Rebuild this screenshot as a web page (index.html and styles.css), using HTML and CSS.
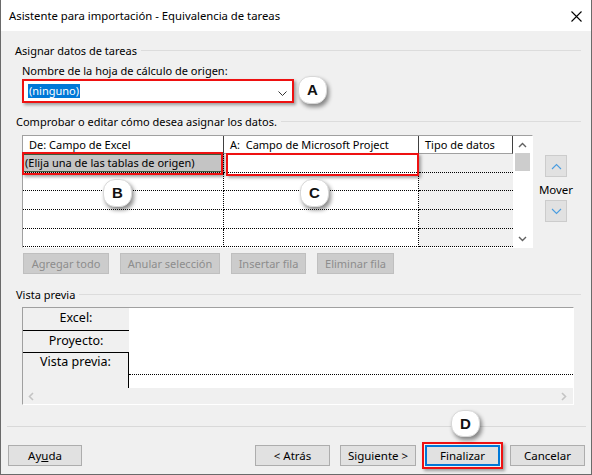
FILE: index.html
```html
<!DOCTYPE html>
<html>
<head>
<meta charset="utf-8">
<link rel="stylesheet" href="styles.css">
</head>
<body>
<div class="window">
  <div class="titlebar">
    <span class="title">Asistente para importación - Equivalencia de tareas</span>
    <svg class="close" width="11" height="11" viewBox="0 0 11 11"><path d="M0.5 0.5 L10.5 10.5 M10.5 0.5 L0.5 10.5" stroke="#000" stroke-width="1.1" fill="none"/></svg>
  </div>
  <div class="content">
    <div class="group-title s1"><span>Asignar datos de tareas</span><i></i></div>
    <div class="label">Nombre de la hoja de cálculo de origen:</div>
    <div class="combo-row">
      <div class="combo">
        <span class="sel">(ninguno)</span>
        <svg class="chev" width="9" height="5" viewBox="0 0 9 5"><path d="M0.5 0.5 L4.5 4.5 L8.5 0.5" stroke="#333" stroke-width="1" fill="none"/></svg>
      </div>
      <div class="badge">A</div>
    </div>

    <div class="group-title s2"><span>Comprobar o editar cómo desea asignar los datos.</span><i></i></div>
    <div class="table-row">
      <div class="table">
        <div class="grid">
          <div class="hcell">De: Campo de Excel</div>
          <div class="hcell">A:&nbsp; Campo de Microsoft Project</div>
          <div class="hcell">Tipo de datos</div>

          <div class="cell c1 r1 current">(Elija una de las tablas de origen)</div>
          <div class="cell c2 r1"></div>
          <div class="cell c3 r1"></div>

          <div class="cell c1"></div><div class="cell c2"></div><div class="cell c3"></div>
          <div class="cell c1"></div><div class="cell c2"></div><div class="cell c3"></div>
          <div class="cell c1 tall"></div><div class="cell c2 tall"></div><div class="cell c3 tall"></div>
          <div class="cell c1"></div><div class="cell c2"></div><div class="cell c3"></div>
          <div class="cell c1"></div><div class="cell c2"></div><div class="cell c3"></div>
        </div>
        <div class="vscroll">
          <svg class="arr-up" width="9" height="6" viewBox="0 0 9 6"><path d="M1 5 L4.5 1.5 L8 5" stroke="#606060" stroke-width="1.4" fill="none"/></svg>
          <div class="thumb"></div>
          <svg class="arr-down" width="9" height="6" viewBox="0 0 9 6"><path d="M1 1 L4.5 4.5 L8 1" stroke="#606060" stroke-width="1.4" fill="none"/></svg>
        </div>
        <div class="mark m1"></div>
        <div class="mark m2"></div>
        <div class="badge b">B</div>
        <div class="badge c">C</div>
      </div>
      <div class="mover">
        <div class="mbtn"><svg width="11" height="7" viewBox="0 0 11 7"><path d="M1 6 L5.5 1.5 L10 6" stroke="#4a9de0" stroke-width="1.1" fill="none"/></svg></div>
        <div class="mlabel">Mover</div>
        <div class="mbtn down"><svg width="11" height="7" viewBox="0 0 11 7"><path d="M1 1 L5.5 5.5 L10 1" stroke="#4a9de0" stroke-width="1.1" fill="none"/></svg></div>
      </div>
    </div>

    <div class="actions">
      <div class="btn disabled w1">Agregar todo</div>
      <div class="btn disabled w2">Anular selección</div>
      <div class="btn disabled w3">Insertar fila</div>
      <div class="btn disabled w4">Eliminar fila</div>
    </div>

    <div class="group-title s3"><span>Vista previa</span><i></i></div>
    <div class="preview">
      <div class="pv-body">
        <div class="pv-labels">
          <div class="pl pl1">Excel:</div>
          <div class="pl pl2">Proyecto:</div>
          <div class="pl pl3">Vista previa:</div>
        </div>
        <div class="pv-data"><div class="dotline"></div></div>
      </div>
      <div class="hscroll">
        <svg width="6" height="9" viewBox="0 0 6 9"><path d="M5 1 L1.5 4.5 L5 8" stroke="#c4c4c4" stroke-width="1.6" fill="none"/></svg>
        <svg width="6" height="9" viewBox="0 0 6 9"><path d="M1 1 L4.5 4.5 L1 8" stroke="#c4c4c4" stroke-width="1.6" fill="none"/></svg>
      </div>
    </div>

    <div class="sep"></div>

    <div class="footer">
      <div class="btn fb help">Ay<u>u</u>da</div>
      <div class="spacer"></div>
      <div class="btn fb back">&lt; Atrás</div>
      <div class="btn fb next">Siguiente &gt;</div>
      <div class="finish-mark"><div class="btn fb default">Finalizar</div></div>
      <div class="btn fb cancel">Cancelar</div>
    </div>
  </div>
  <div class="badge d">D</div>
</div>
</body>
</html>
```

FILE: styles.css
```css
* { box-sizing: border-box; }
html, body { margin: 0; padding: 0; background: #f0f0f0; }
body {
  font-family: "Noto Sans", "Open Sans", sans-serif;
  font-size: 11px;
  line-height: 14px;
  color: #000;
}
.window {
  position: relative;
  width: 592px;
  height: 475px;
  background: #f0f0f0;
  border-left: 1px solid #6a6a6a;
  border-right: 1px solid #6a6a6a;
  border-bottom: 1px solid #6a6a6a;
  overflow: hidden;
}
.titlebar {
  height: 31px;
  background: #fff;
  display: flex;
  align-items: center;
  padding-left: 8px;
  padding-right: 9px;
}
.title { font-size: 11.3px; flex: 1; padding-top: 1px; }
.close { display: block; margin-top: 1px; }

.group-title {
  display: flex;
  align-items: center;
  height: 14px;
  margin-left: 14px;
  margin-right: 10px;
}
.group-title i {
  flex: 1;
  height: 1px;
  background: #dcdcdc;
  margin-left: 4px;
  margin-top: -1px;
}
.s1 { margin-top: 13px; }
.s2 { margin-top: 12px; margin-left: 15px; }
.s3 { margin-top: 14px; margin-left: 15px; }

.label { margin-top: 6px; margin-left: 21px; height: 14px; }

.combo-row {
  display: flex;
  align-items: center;
  margin-top: 1px;
  margin-left: 21px;
  height: 24px;
}
.combo {
  width: 272px;
  height: 24px;
  border: 2px solid #ee1111;
  background: #fff;
  box-shadow: 2px 2px 3px rgba(0,0,0,0.35);
  display: flex;
  align-items: flex-start;
  justify-content: space-between;
  padding: 3px 5px 0 4px;
}
.sel {
  background: #0078d7;
  color: #fff;
  height: 14px;
  line-height: 14px;
  padding: 0 1px;
}
.chev { display: block; margin-top: 7px; }

.badge {
  width: 29px;
  height: 28px;
  border-radius: 12px;
  background: #fff;
  box-shadow: 2px 3px 4px rgba(0,0,0,0.45);
  border: 1px solid #d8d8d8;
  display: flex;
  align-items: center;
  justify-content: center;
  font-family: "Liberation Sans", Arial, sans-serif;
  font-weight: bold;
  font-size: 15px;
  color: #111;
}
.combo-row .badge { margin-left: 4px; margin-top: -4px; margin-bottom: -1px; }
.badge.b { position: absolute; left: 80px; top: 43px; }
.badge.c { position: absolute; left: 277px; top: 43px; }
.badge.d { position: absolute; left: 450px; top: 410px; height: 27px; }

.table-row {
  display: flex;
  margin-top: 6px;
  margin-left: 21px;
}
.table {
  position: relative;
  width: 511px;
  height: 113px;
  border-top: 1px solid #a0a0a0;
  border-left: 1px solid #a0a0a0;
  border-right: 1px solid #fff;
  border-bottom: 1px solid #fff;
  background: #fff;
  display: flex;
}
.grid {
  display: grid;
  grid-template-columns: 201px 195px 94px;
  grid-auto-rows: min-content;
  height: 111px;
  overflow: hidden;
  align-content: start;
}
.hcell {
  height: 18px;
  border-bottom: 1px solid #a0a0a0;
  border-right: 1px solid #404040;
  padding-left: 6px;
  line-height: 17px;
  white-space: nowrap;
  overflow: hidden;
}
.cell {
  height: 18.3px;
  border-bottom: 1px dotted #000;
}
.cell.tall { height: 19px; }
.c1, .c2 { border-right: 1px dotted #000; }
.c3 { background: #f0f0f0; }
.r1 { height: 19px; }
.current {
  background: #c4c4c4;
  box-shadow: inset 0 0 0 1px #3b5a3b;
  padding-left: 2px;
  line-height: 17px;
  white-space: nowrap;
}
.vscroll {
  position: relative;
  width: 19px;
  background: #fff;
}
.arr-up { position: absolute; left: 5px; top: 6px; }
.arr-down { position: absolute; left: 5px; top: 100px; }
.thumb {
  position: absolute;
  left: 2px;
  top: 17px;
  width: 15px;
  height: 18px;
  background: #cdcdcd;
}
.mark {
  position: absolute;
  border: 2px solid #ee1111;
  box-shadow: 2px 2px 3px rgba(0,0,0,0.35);
}
.m1 { left: -1px; top: 16px; width: 201px; height: 23px; }
.m2 { left: 203px; top: 17px; width: 193px; height: 23px; }

.mover {
  width: 34px;
  margin-left: 6px;
  padding-top: 20px;
  display: flex;
  flex-direction: column;
  align-items: center;
}
.mbtn {
  width: 22px;
  height: 22px;
  background: #e1e1e1;
  border: 1px solid #cccccc;
  display: flex;
  align-items: center;
  justify-content: center;
}
.mlabel { margin-top: 6px; height: 14px; font-size: 11.5px; }
.mbtn.down { margin-top: 3px; }

.actions {
  display: flex;
  margin-top: 5px;
  margin-left: 22px;
  gap: 11px;
}
.btn {
  height: 21px;
  border: 1px solid #adadad;
  background: #e1e1e1;
  display: flex;
  align-items: center;
  justify-content: center;
  white-space: nowrap;
}
.btn.disabled {
  background: #cccccc;
  border-color: #bfbfbf;
  color: #8d8d8d;
}
.w1 { width: 86px; }
.w2 { width: 100px; }
.w3 { width: 75px; }
.w4 { width: 77px; }

.preview {
  margin-top: 5px;
  margin-left: 21px;
  width: 552px;
  height: 98px;
  border-top: 1px solid #a0a0a0;
  border-left: 1px solid #a0a0a0;
  border-right: 1px solid #fff;
  border-bottom: 1px solid #fff;
}
.pv-body { display: flex; height: 80px; }
.pv-labels { width: 106px; background: #f0f0f0; font-size: 12.5px; }
.pl { text-align: center; }
.pl1 { height: 23px; border-bottom: 1px solid #000; line-height: 20px; }
.pl2 { height: 22px; border-bottom: 1px solid #000; line-height: 20px; }
.pl3 { height: 35px; border-right: 1px solid #000; line-height: 18px; }
.pv-data { flex: 1; background: #fff; }
.dotline { margin-top: 66px; border-top: 1px dotted #000; }
.hscroll {
  height: 16px;
  background: #f0f0f0;
  display: flex;
  justify-content: space-between;
  align-items: center;
  padding: 0 6px 0 5px;
}
.hscroll svg { display: block; }

.sep {
  margin-top: 21px;
  margin-left: 6px;
  margin-right: 5px;
  height: 1px;
  background: #d9d9d9;
}
.footer {
  display: flex;
  align-items: center;
  margin-top: 15px;
  height: 27px;
  padding-left: 7px;
  padding-right: 6px;
}
.spacer { flex: 1; }
.fb { width: 75px; font-size: 11.5px; }
.help { width: 74px; }
.back { margin-right: 10px; }
.next { width: 76px; margin-right: 6px; }
.finish-mark {
  border: 2px solid #ee1111;
  padding: 1px;
  box-shadow: 2px 2px 3px rgba(0,0,0,0.35);
  margin-right: 7px;
}
.btn.default {
  border: 1px solid #0078d7;
  box-shadow: inset 0 0 0 1px #0078d7;
}
```
